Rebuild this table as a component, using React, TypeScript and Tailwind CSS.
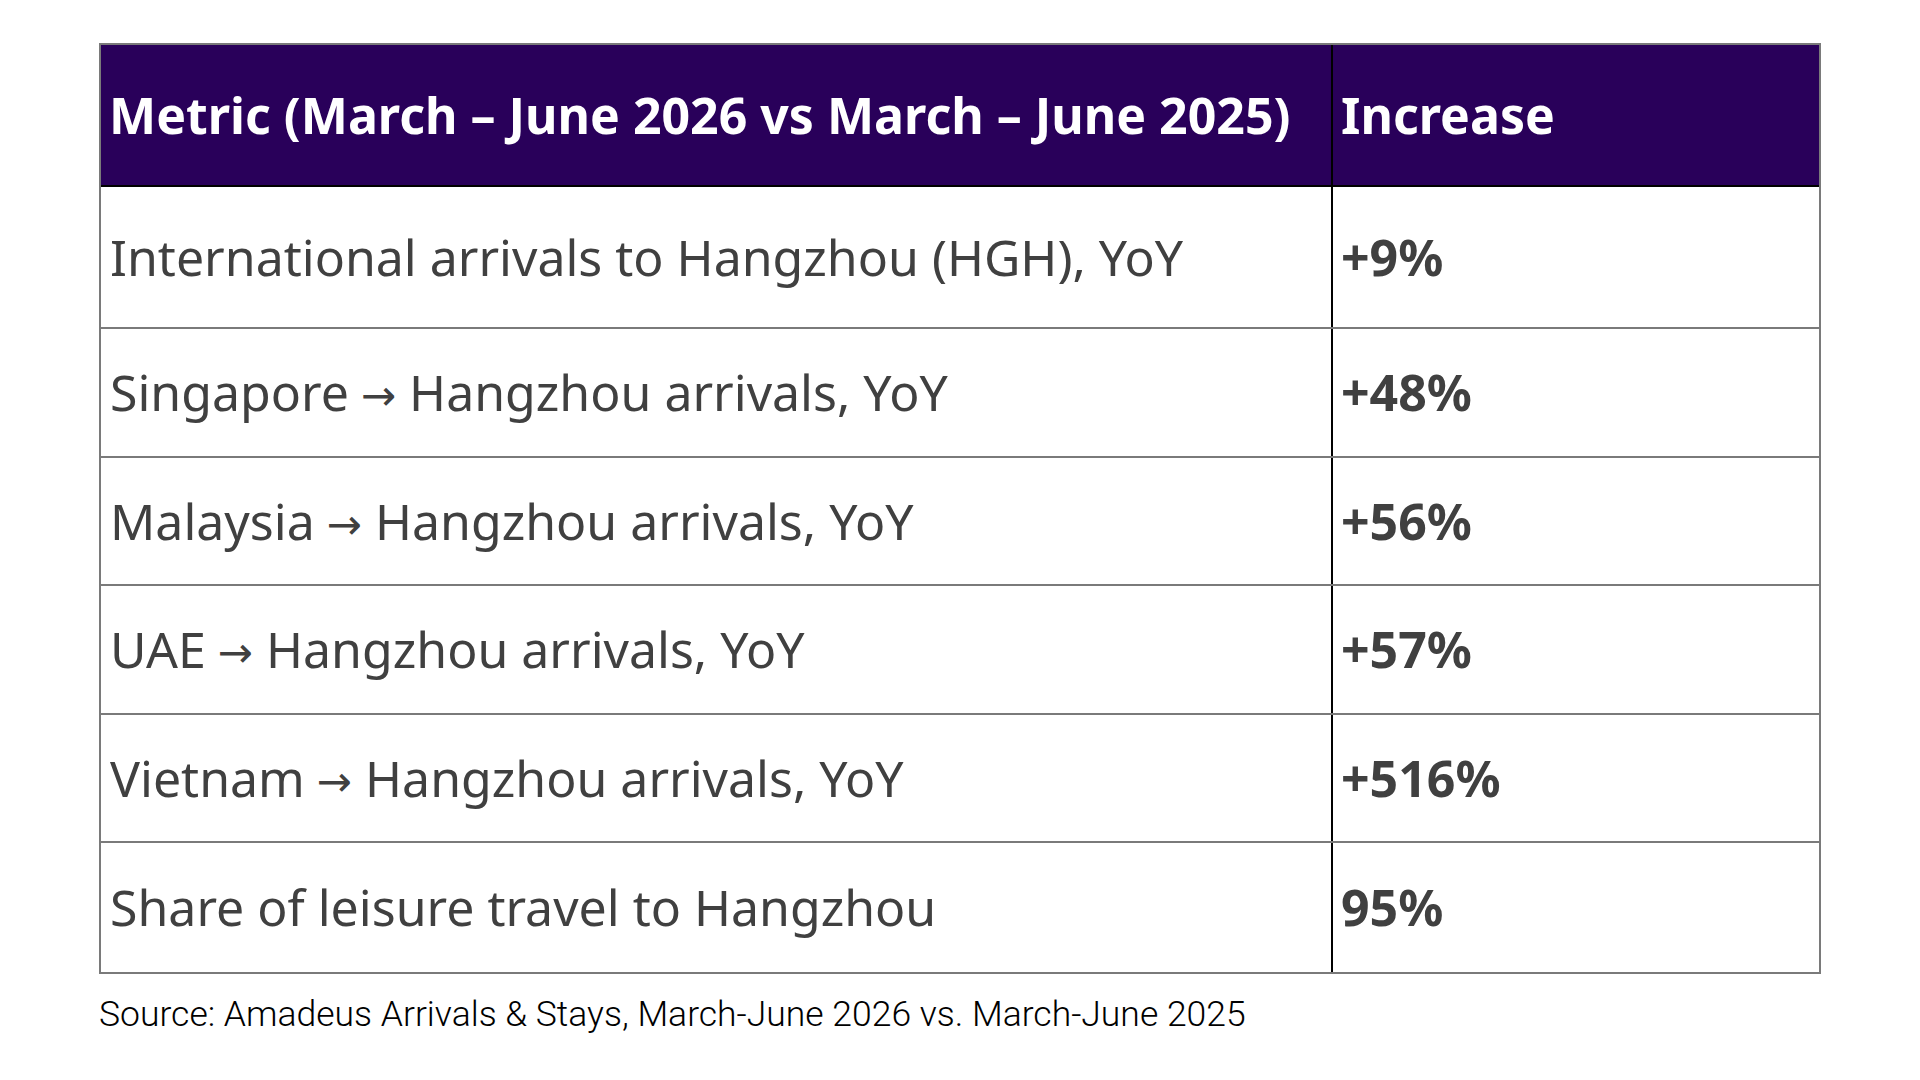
const rows: { metric: React.ReactNode; value: string; h: string }[] = [
  { metric: "International arrivals to Hangzhou (HGH), YoY", value: "+9%", h: "h-[142px]" },
  { metric: <>Singapore<Arrow />Hangzhou arrivals, YoY</>, value: "+48%", h: "h-[129px]" },
  { metric: <>Malaysia<Arrow />Hangzhou arrivals, YoY</>, value: "+56%", h: "h-[128px]" },
  { metric: <>UAE<Arrow />Hangzhou arrivals, YoY</>, value: "+57%", h: "h-[129px]" },
  { metric: <>Vietnam<Arrow />Hangzhou arrivals, YoY</>, value: "+516%", h: "h-[128px]" },
  { metric: "Share of leisure travel to Hangzhou", value: "95%", h: "h-[129px]" },
];

function Arrow() {
  return (
    <span className="inline-block leading-none ml-[12px] mr-[13px] text-[42px] font-['DejaVu_Sans',sans-serif] align-[1px]">→</span>
  );
}

export default function App() {
  return (
    <div className="w-[1920px] h-[1080px] bg-white pt-[43px] pl-[99px] font-['Noto_Sans',sans-serif]">
      <div className="w-[1722px] border-2 border-[#7a7a7a]">
        <div className="flex h-[142px] bg-[#29005a] border-b-2 border-black text-white font-bold text-[50px]">
          <div className="w-[1232px] flex items-center pl-[8px] border-r-2 border-black">
            Metric (March – June 2026 vs March – June 2025)
          </div>
          <div className="flex-1 flex items-center pl-[8px]">Increase</div>
        </div>
        {rows.map((r, i) => (
          <div
            key={i}
            className={`flex ${r.h} ${i < rows.length - 1 ? "border-b-2 border-[#7a7a7a]" : ""} text-[#404040]`}
          >
            <div className="w-[1232px] flex items-center pl-[9px] border-r-2 border-black text-[50px]">
              <span>{r.metric}</span>
            </div>
            <div className="flex-1 flex items-center pl-[8px] text-[50px] font-bold">{r.value}</div>
          </div>
        ))}
      </div>
      <div className="mt-[14px] text-[35.5px] text-black font-['Roboto',sans-serif] font-light">
        Source: Amadeus Arrivals &amp; Stays, March-June 2026 vs. March-June 2025
      </div>
    </div>
  );
}
